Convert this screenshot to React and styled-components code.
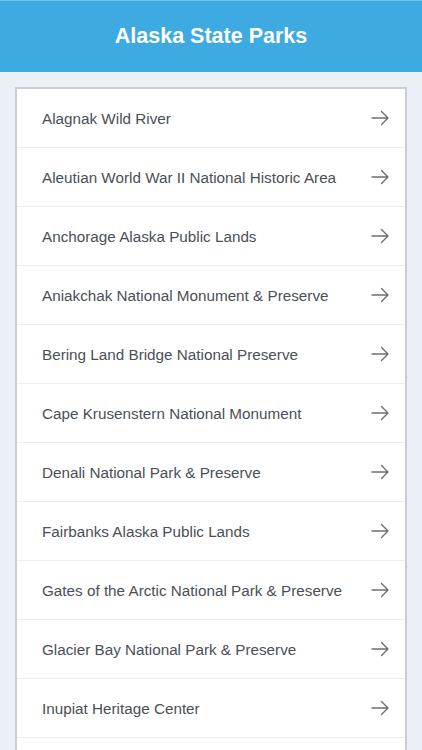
import React from 'react'
import styled, { createGlobalStyle } from 'styled-components'

const parks = [
    'Alagnak Wild River',
    'Aleutian World War II National Historic Area',
    'Anchorage Alaska Public Lands',
    'Aniakchak National Monument & Preserve',
    'Bering Land Bridge National Preserve',
    'Cape Krusenstern National Monument',
    'Denali National Park & Preserve',
    'Fairbanks Alaska Public Lands',
    'Gates of the Arctic National Park & Preserve',
    'Glacier Bay National Park & Preserve',
    'Inupiat Heritage Center',
]

const Arrow = () => (
    <svg width="19" height="16" viewBox="0 0 19 16" fill="none">
        <path d="M1 8h16M10.5 1.5L17 8l-6.5 6.5" stroke="#6a6e74" strokeWidth="1.4" strokeLinecap="round" strokeLinejoin="round" />
    </svg>
)

export default function App() {
    return (
        <>
            <GlobalStyle />
            <Page>
                <Header>Alaska State Parks</Header>
                <Card>
                    {parks.map(name => (
                        <Row key={name}>
                            <RowTitle>{name}</RowTitle>
                            <Arrow />
                        </Row>
                    ))}
                </Card>
            </Page>
        </>
    )
}

const GlobalStyle = createGlobalStyle`
    html, body {
        margin: 0;
        padding: 0;
        background: #ebeff6;
        font-family: "Liberation Sans", Arial, sans-serif;
    }
`

const Page = styled.div`
    width: 422px;
    height: 750px;
    overflow: hidden;
    background: #ebeff6;
`

const Header = styled.div`
    height: 72px;
    background: #3dabe2;
    border-top: 1px solid #6cc3ee;
    box-sizing: border-box;
    display: flex;
    align-items: center;
    justify-content: center;
    color: #fff;
    font-size: 21.5px;
    font-weight: bold;
    padding-bottom: 1px;
`

const Card = styled.div`
    margin: 15px 15px 0 15px;
    background: #fff;
    border: 2px solid #c9ced6;
    border-bottom: none;
    padding-bottom: 40px;
`

const Row = styled.div`
    height: 59px;
    box-sizing: border-box;
    display: flex;
    align-items: center;
    justify-content: space-between;
    padding: 0 15px 0 25px;
    border-bottom: 1px solid #edeff2;
`

const RowTitle = styled.div`
    color: #4a4f57;
    font-size: 15.25px;
`
